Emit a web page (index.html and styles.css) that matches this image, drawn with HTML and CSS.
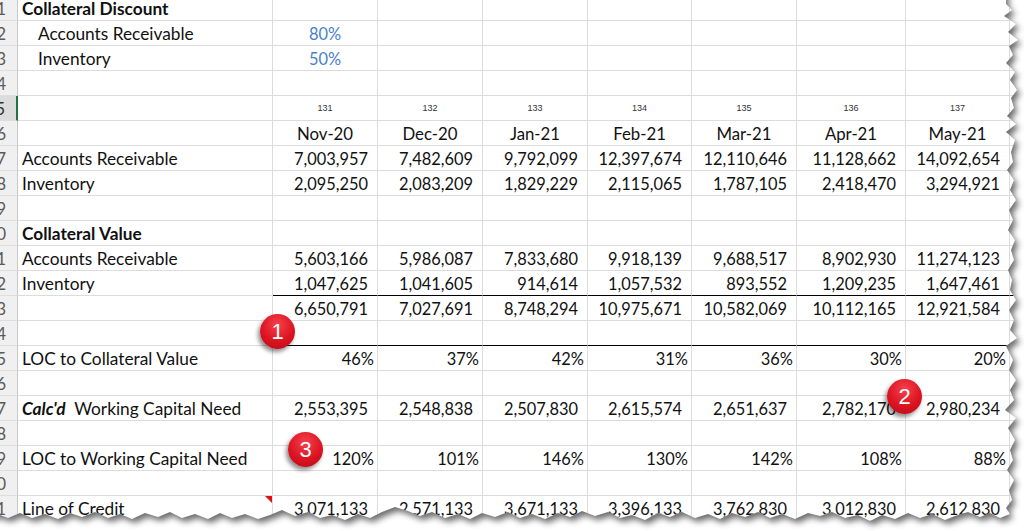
FILE: index.html
```html
<!DOCTYPE html>
<html>
<head>
<meta charset="utf-8">
<link rel="stylesheet" href="styles.css">
</head>
<body>
<div class="sheet">
  <div class="row first"><div class="hdr">1</div><div class="c lbl bold">Collateral Discount</div><div class="c"></div><div class="c"></div><div class="c"></div><div class="c"></div><div class="c"></div><div class="c"></div><div class="c"></div><div class="c"></div></div>
  <div class="row"><div class="hdr">2</div><div class="c lbl ind">Accounts Receivable</div><div class="c ctr blue">80%</div><div class="c"></div><div class="c"></div><div class="c"></div><div class="c"></div><div class="c"></div><div class="c"></div><div class="c"></div></div>
  <div class="row"><div class="hdr">3</div><div class="c lbl ind">Inventory</div><div class="c ctr blue">50%</div><div class="c"></div><div class="c"></div><div class="c"></div><div class="c"></div><div class="c"></div><div class="c"></div><div class="c"></div></div>
  <div class="row"><div class="hdr">4</div><div class="c"></div><div class="c"></div><div class="c"></div><div class="c"></div><div class="c"></div><div class="c"></div><div class="c"></div><div class="c"></div><div class="c"></div></div>
  <div class="row"><div class="hdr sel">5</div><div class="c"></div><div class="c ctr sm">131</div><div class="c ctr sm">132</div><div class="c ctr sm">133</div><div class="c ctr sm">134</div><div class="c ctr sm">135</div><div class="c ctr sm">136</div><div class="c ctr sm">137</div><div class="c"></div></div>
  <div class="row"><div class="hdr">6</div><div class="c"></div><div class="c ctr mon">Nov-20</div><div class="c ctr mon">Dec-20</div><div class="c ctr mon">Jan-21</div><div class="c ctr mon">Feb-21</div><div class="c ctr mon">Mar-21</div><div class="c ctr mon">Apr-21</div><div class="c ctr mon">May-21</div><div class="c"></div></div>
  <div class="row"><div class="hdr">7</div><div class="c lbl">Accounts Receivable</div><div class="c num">7,003,957</div><div class="c num">7,482,609</div><div class="c num">9,792,099</div><div class="c num">12,397,674</div><div class="c num">12,110,646</div><div class="c num">11,128,662</div><div class="c num">14,092,654</div><div class="c"></div></div>
  <div class="row"><div class="hdr">8</div><div class="c lbl">Inventory</div><div class="c num">2,095,250</div><div class="c num">2,083,209</div><div class="c num">1,829,229</div><div class="c num">2,115,065</div><div class="c num">1,787,105</div><div class="c num">2,418,470</div><div class="c num">3,294,921</div><div class="c"></div></div>
  <div class="row"><div class="hdr">9</div><div class="c"></div><div class="c"></div><div class="c"></div><div class="c"></div><div class="c"></div><div class="c"></div><div class="c"></div><div class="c"></div><div class="c"></div></div>
  <div class="row"><div class="hdr">10</div><div class="c lbl bold">Collateral Value</div><div class="c"></div><div class="c"></div><div class="c"></div><div class="c"></div><div class="c"></div><div class="c"></div><div class="c"></div><div class="c"></div></div>
  <div class="row"><div class="hdr">11</div><div class="c lbl">Accounts Receivable</div><div class="c num">5,603,166</div><div class="c num">5,986,087</div><div class="c num">7,833,680</div><div class="c num">9,918,139</div><div class="c num">9,688,517</div><div class="c num">8,902,930</div><div class="c num">11,274,123</div><div class="c"></div></div>
  <div class="row"><div class="hdr">12</div><div class="c lbl">Inventory</div><div class="c num ul">1,047,625</div><div class="c num ul">1,041,605</div><div class="c num ul">914,614</div><div class="c num ul">1,057,532</div><div class="c num ul">893,552</div><div class="c num ul">1,209,235</div><div class="c num ul">1,647,461</div><div class="c ul"></div></div>
  <div class="row"><div class="hdr">13</div><div class="c"></div><div class="c num">6,650,791</div><div class="c num">7,027,691</div><div class="c num">8,748,294</div><div class="c num">10,975,671</div><div class="c num">10,582,069</div><div class="c num">10,112,165</div><div class="c num">12,921,584</div><div class="c"></div></div>
  <div class="row"><div class="hdr">14</div><div class="c"></div><div class="c ul"></div><div class="c ul"></div><div class="c ul"></div><div class="c ul"></div><div class="c ul"></div><div class="c ul"></div><div class="c ul"></div><div class="c ul"></div></div>
  <div class="row"><div class="hdr">15</div><div class="c lbl">LOC to Collateral Value</div><div class="c pct">46%</div><div class="c pct">37%</div><div class="c pct">42%</div><div class="c pct">31%</div><div class="c pct">36%</div><div class="c pct">30%</div><div class="c pct">20%</div><div class="c"></div></div>
  <div class="row"><div class="hdr">16</div><div class="c"></div><div class="c"></div><div class="c"></div><div class="c"></div><div class="c"></div><div class="c"></div><div class="c"></div><div class="c"></div><div class="c"></div></div>
  <div class="row"><div class="hdr">17</div><div class="c lbl"><b><i>Calc'd</i></b>&nbsp; Working Capital Need</div><div class="c num">2,553,395</div><div class="c num">2,548,838</div><div class="c num">2,507,830</div><div class="c num">2,615,574</div><div class="c num">2,651,637</div><div class="c num">2,782,170</div><div class="c num">2,980,234</div><div class="c"></div></div>
  <div class="row"><div class="hdr">18</div><div class="c"></div><div class="c"></div><div class="c"></div><div class="c"></div><div class="c"></div><div class="c"></div><div class="c"></div><div class="c"></div><div class="c"></div></div>
  <div class="row"><div class="hdr">19</div><div class="c lbl">LOC to Working Capital Need</div><div class="c pct">120%</div><div class="c pct">101%</div><div class="c pct">146%</div><div class="c pct">130%</div><div class="c pct">142%</div><div class="c pct">108%</div><div class="c pct">88%</div><div class="c"></div></div>
  <div class="row"><div class="hdr">20</div><div class="c"></div><div class="c"></div><div class="c"></div><div class="c"></div><div class="c"></div><div class="c"></div><div class="c"></div><div class="c"></div><div class="c"></div></div>
  <div class="row"><div class="hdr">21</div><div class="c lbl note">Line of Credit<span class="tri"></span></div><div class="c num">3,071,133</div><div class="c num">2,571,133</div><div class="c num">3,671,133</div><div class="c num">3,396,133</div><div class="c num">3,762,830</div><div class="c num">3,012,830</div><div class="c num">2,612,830</div><div class="c"></div></div>
  <div class="row"><div class="hdr">22</div><div class="c"></div><div class="c"></div><div class="c"></div><div class="c"></div><div class="c"></div><div class="c"></div><div class="c"></div><div class="c"></div><div class="c"></div></div>
</div>

<div class="badge b1">1</div>
<div class="badge b2">2</div>
<div class="badge b3">3</div>

<svg class="torn" width="1024" height="531" viewBox="0 0 1024 531" xmlns="http://www.w3.org/2000/svg">
  <defs>
    <filter id="blur" x="-5%" y="-5%" width="110%" height="110%">
      <feGaussianBlur stdDeviation="3"/>
    </filter>
    <clipPath id="outside">
      <path clip-rule="evenodd" d="M0,0 H1024 V531 H0 Z M-20,-20 L1006,-20 L1006,4 L1012,10 L1004,16 L1016,24 L1008,32 L1018,40 L1009,46 L1013,55 L1006,63 L1015,72 L1010,80 L1017,90 L1011,98 L1014,108 L1007,116 L1016,124 L1006,132 L1015,140 L1011,152 L1013,162 L1007,170 L1014,180 L1010,190 L1016,200 L1009,210 L1013,220 L1008,230 L1015,240 L1011,250 L1014,260 L1008,270 L1012,280 L1010,290 L1016,300 L1009,310 L1014,320 L1010,330 L1017,338 L1006,346 L1013,360 L1009,370 L1016,380 L1010,390 L1014,400 L1005,410 L1016,418 L1008,428 L1015,440 L1010,450 L1013,460 L1007,470 L1014,480 L1009,490 L1012,500 L1006,508 L1010,514 L1000,518 L990,513 L980,517 L968,512 L955,516 L945,520 L932,514 L920,518 L908,513 L895,519 L882,515 L870,521 L858,515 L845,518 L832,512 L820,516 L808,513 L795,519 L782,514 L770,518 L758,512 L745,517 L732,513 L720,519 L708,514 L695,518 L682,512 L670,517 L658,513 L645,520 L632,515 L620,518 L608,512 L595,516 L582,511 L570,517 L558,513 L545,519 L532,514 L520,518 L508,512 L495,517 L482,513 L470,519 L458,514 L445,518 L432,512 L420,516 L408,511 L395,507 L382,512 L370,518 L358,514 L345,520 L332,515 L320,518 L308,512 L295,516 L282,510 L270,515 L258,519 L245,514 L232,518 L220,513 L208,519 L195,514 L182,518 L170,512 L158,517 L145,513 L132,519 L120,514 L108,518 L95,512 L82,517 L70,513 L58,519 L45,514 L32,518 L20,513 L8,518 L0,515 L-20,515 Z"/>
    </clipPath>
  </defs>
  <path fill="#ffffff" fill-rule="evenodd" d="M0,0 H1024 V531 H0 Z M-20,-20 L1006,-20 L1006,4 L1012,10 L1004,16 L1016,24 L1008,32 L1018,40 L1009,46 L1013,55 L1006,63 L1015,72 L1010,80 L1017,90 L1011,98 L1014,108 L1007,116 L1016,124 L1006,132 L1015,140 L1011,152 L1013,162 L1007,170 L1014,180 L1010,190 L1016,200 L1009,210 L1013,220 L1008,230 L1015,240 L1011,250 L1014,260 L1008,270 L1012,280 L1010,290 L1016,300 L1009,310 L1014,320 L1010,330 L1017,338 L1006,346 L1013,360 L1009,370 L1016,380 L1010,390 L1014,400 L1005,410 L1016,418 L1008,428 L1015,440 L1010,450 L1013,460 L1007,470 L1014,480 L1009,490 L1012,500 L1006,508 L1010,514 L1000,518 L990,513 L980,517 L968,512 L955,516 L945,520 L932,514 L920,518 L908,513 L895,519 L882,515 L870,521 L858,515 L845,518 L832,512 L820,516 L808,513 L795,519 L782,514 L770,518 L758,512 L745,517 L732,513 L720,519 L708,514 L695,518 L682,512 L670,517 L658,513 L645,520 L632,515 L620,518 L608,512 L595,516 L582,511 L570,517 L558,513 L545,519 L532,514 L520,518 L508,512 L495,517 L482,513 L470,519 L458,514 L445,518 L432,512 L420,516 L408,511 L395,507 L382,512 L370,518 L358,514 L345,520 L332,515 L320,518 L308,512 L295,516 L282,510 L270,515 L258,519 L245,514 L232,518 L220,513 L208,519 L195,514 L182,518 L170,512 L158,517 L145,513 L132,519 L120,514 L108,518 L95,512 L82,517 L70,513 L58,519 L45,514 L32,518 L20,513 L8,518 L0,515 L-20,515 Z"/>
  <g clip-path="url(#outside)">
    <path fill="#5a5a5a" opacity="0.9" filter="url(#blur)" transform="translate(3,4)" d="M-20,-20 L1006,-20 L1006,4 L1012,10 L1004,16 L1016,24 L1008,32 L1018,40 L1009,46 L1013,55 L1006,63 L1015,72 L1010,80 L1017,90 L1011,98 L1014,108 L1007,116 L1016,124 L1006,132 L1015,140 L1011,152 L1013,162 L1007,170 L1014,180 L1010,190 L1016,200 L1009,210 L1013,220 L1008,230 L1015,240 L1011,250 L1014,260 L1008,270 L1012,280 L1010,290 L1016,300 L1009,310 L1014,320 L1010,330 L1017,338 L1006,346 L1013,360 L1009,370 L1016,380 L1010,390 L1014,400 L1005,410 L1016,418 L1008,428 L1015,440 L1010,450 L1013,460 L1007,470 L1014,480 L1009,490 L1012,500 L1006,508 L1010,514 L1000,518 L990,513 L980,517 L968,512 L955,516 L945,520 L932,514 L920,518 L908,513 L895,519 L882,515 L870,521 L858,515 L845,518 L832,512 L820,516 L808,513 L795,519 L782,514 L770,518 L758,512 L745,517 L732,513 L720,519 L708,514 L695,518 L682,512 L670,517 L658,513 L645,520 L632,515 L620,518 L608,512 L595,516 L582,511 L570,517 L558,513 L545,519 L532,514 L520,518 L508,512 L495,517 L482,513 L470,519 L458,514 L445,518 L432,512 L420,516 L408,511 L395,507 L382,512 L370,518 L358,514 L345,520 L332,515 L320,518 L308,512 L295,516 L282,510 L270,515 L258,519 L245,514 L232,518 L220,513 L208,519 L195,514 L182,518 L170,512 L158,517 L145,513 L132,519 L120,514 L108,518 L95,512 L82,517 L70,513 L58,519 L45,514 L32,518 L20,513 L8,518 L0,515 L-20,515 Z"/>
  </g>
</svg>
</body>
</html>
```

FILE: styles.css
```css
html, body {
  margin: 0;
  padding: 0;
  background: #ffffff;
}
body {
  width: 1024px;
  height: 531px;
  overflow: hidden;
  position: relative;
  font-family: Lato, "Open Sans", sans-serif;
  font-size: 16.4px;
  color: #111;
}
.sheet {
  display: flex;
  flex-direction: column;
}
.row {
  display: grid;
  grid-template-columns: 18px 255px 105px 105px 105px 104px 105px 109px 104px 14px;
  height: 25px;
}
.row.first {
  height: 21px;
}
.hdr, .c {
  box-sizing: border-box;
  border-bottom: 1px solid #dcdcdc;
  border-right: 1px solid #dcdcdc;
  overflow: hidden;
  white-space: nowrap;
  line-height: 20px;
}
.hdr {
  display: flex;
  justify-content: flex-end;
  align-items: flex-end;
  padding-right: 11px;
  padding-bottom: 1px;
  background: #f0f0f0;
  color: #5a5a5a;
  font-size: 17px;
  border-right: 1px solid #c9c9c9;
  border-bottom: 1px solid #dedede;
}
.hdr.sel {
  background: #dcdcdc;
  border-right: 2px solid #217346;
  color: #333;
}
.c {
  display: flex;
  align-items: flex-end;
  padding-bottom: 1px;
}
.lbl {
  padding-left: 4px;
  font-size: 17.3px;
}
.lbl.ind {
  padding-left: 20px;
}
.bold {
  font-weight: 700;
}
.ctr {
  justify-content: center;
}
.mon {
  font-size: 16.8px;
}
.num {
  justify-content: flex-end;
  padding-right: 9px;
}
.pct {
  justify-content: flex-end;
  padding-right: 3px;
}
.blue {
  color: #4a7fcb;
}
.sm {
  font-family: "Liberation Sans", Arial, sans-serif;
  font-size: 9px;
  align-items: center;
  padding-bottom: 0;
  color: #333;
}
.ul {
  border-bottom: 1px solid #000;
}
.note {
  position: relative;
}
.tri {
  position: absolute;
  top: 0;
  right: 0;
  width: 0;
  height: 0;
  border-top: 7px solid #e01010;
  border-left: 7px solid transparent;
}
.badge {
  position: absolute;
  width: 35px;
  height: 35px;
  border-radius: 50%;
  background: radial-gradient(circle at 50% 30%, #f5414b 0%, #dc1422 55%, #b50a16 100%);
  box-shadow: -2px 3px 4px rgba(0, 0, 0, 0.45);
  color: #fff;
  font-family: "Liberation Sans", Arial, sans-serif;
  font-size: 22px;
  display: flex;
  align-items: center;
  justify-content: center;
}
.b1 { left: 260px; top: 314px; }
.b2 { left: 887px; top: 379px; }
.b3 { left: 288px; top: 432px; }
.torn {
  position: absolute;
  left: 0;
  top: 0;
  pointer-events: none;
}
```
